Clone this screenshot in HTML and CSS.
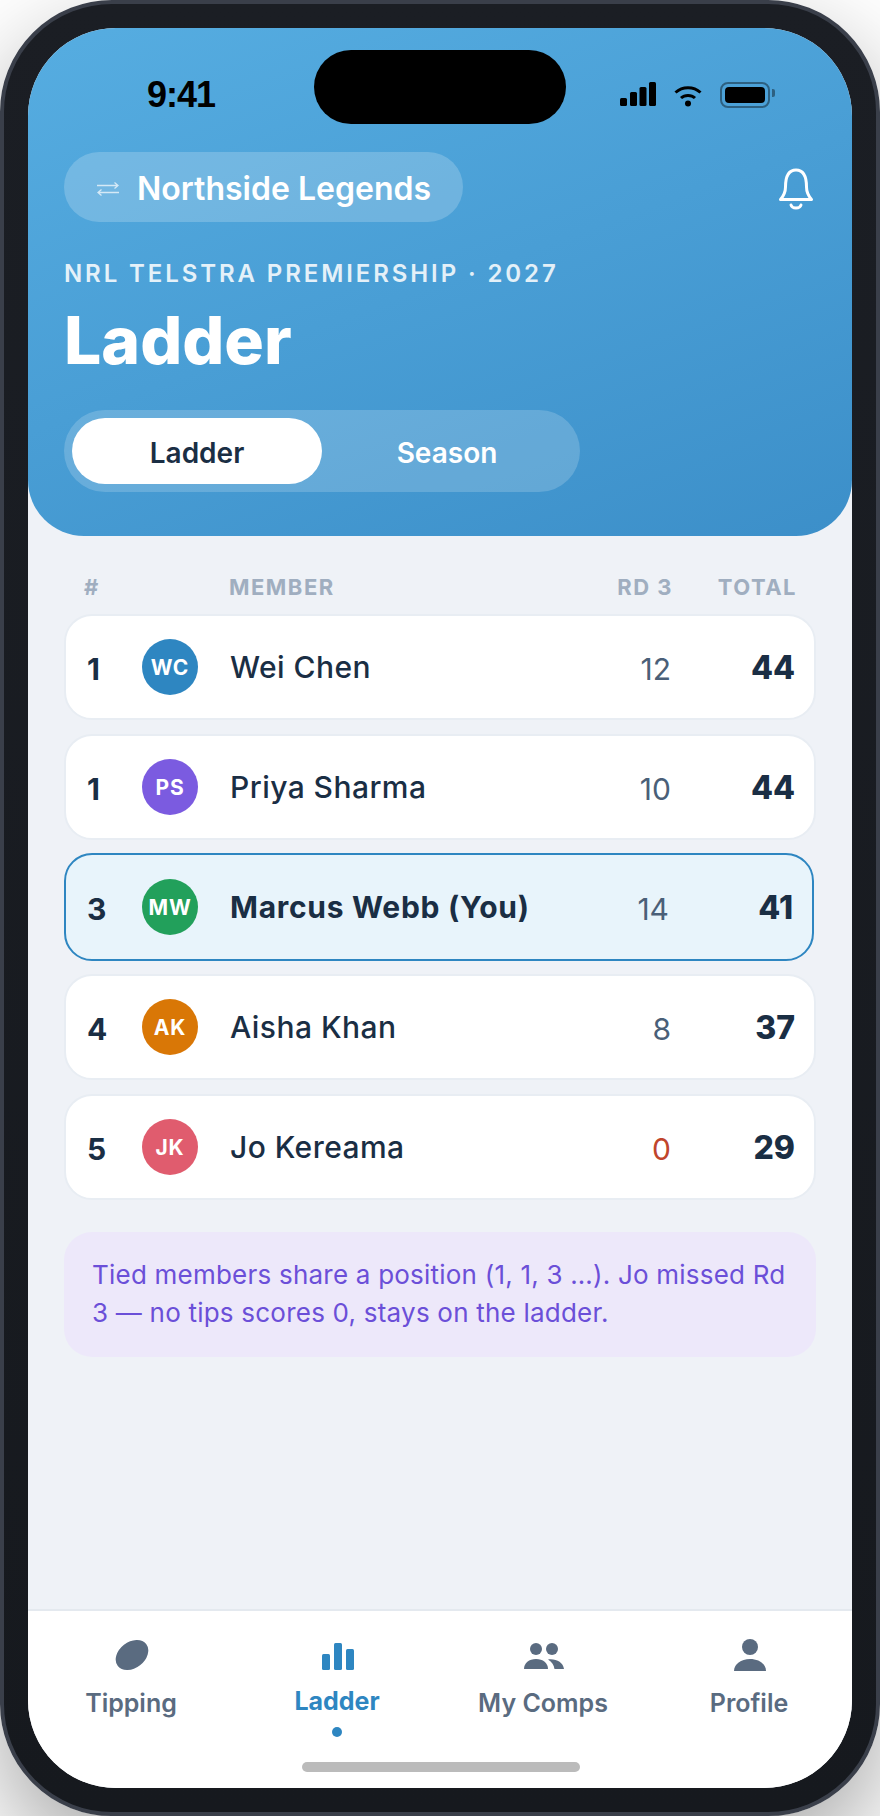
FILE: index.html
```html
<!DOCTYPE html>
<html lang="en">
<head>
  <meta charset="UTF-8">
  <title>Ladder</title>
  <link rel="stylesheet" href="styles.css">
</head>
<body>
  <div class="phone">
    <div class="screen">
      <div class="island"></div>

      <header class="hero">
        <div class="status">
          <span class="time">9:41</span>
          <div class="status-icons">
            <svg class="signal" width="36" height="24" viewBox="0 0 36 24">
              <rect x="0" y="16" width="7" height="8" rx="1.5"/>
              <rect x="10" y="10" width="7" height="14" rx="1.5"/>
              <rect x="19.500" y="5" width="7" height="19" rx="1.5"/>
              <rect x="29" y="0" width="7" height="24" rx="1.5"/>
            </svg>
            <svg class="wifi" width="28" height="22" viewBox="0 0 28 22">
              <path d="M1.500 7.500C8.500 1 19.500 1 26.500 7.500" fill="none" stroke="#000" stroke-width="3"/>
              <path d="M7 13C10.800 9.500 17.200 9.500 21 13" fill="none" stroke="#000" stroke-width="3"/>
              <circle cx="14" cy="18.500" r="3"/>
            </svg>
            <div class="battery"><div class="battery-fill"></div></div>
          </div>
        </div>

        <div class="top-row">
          <div class="comp-chip">
            <svg class="swap" width="22" height="14" viewBox="0 0 22 14" fill="none" stroke="#fff" stroke-width="1.300">
              <path d="M0 3.500H21M17.500 0.500L21 3.500L17.500 6.500"/>
              <path d="M22 10.500H1M4.500 7.500L1 10.500L4.500 13.500"/>
            </svg>
            <span>Northside Legends</span>
          </div>
          <svg class="bell" width="36" height="42" viewBox="0 0 36 42" fill="none" stroke="#fff" stroke-width="3" stroke-linecap="round" stroke-linejoin="round">
            <path d="M7.500 19C7.500 8 11 2 18 2S28.500 8 28.500 19C28.500 25 30.500 28 33.500 31.500H2.500C5.500 28 7.500 25 7.500 19Z"/>
            <path d="M13 37C14 41 22 41 23 37"/>
          </svg>
        </div>

        <div class="eyebrow">NRL TELSTRA PREMIERSHIP · 2027</div>
        <h1 class="title">Ladder</h1>

        <div class="segment">
          <div class="seg-btn active">Ladder</div>
          <div class="seg-btn">Season</div>
        </div>
      </header>

      <main class="content">
        <div class="table-head">
          <span class="col-rank">#</span>
          <span class="col-member">MEMBER</span>
          <span class="col-rd">RD 3</span>
          <span class="col-total">TOTAL</span>
        </div>

        <div class="rows">
          <div class="row">
            <span class="rank">1</span>
            <span class="avatar blue">WC</span>
            <span class="name">Wei Chen</span>
            <span class="rd">12</span>
            <span class="total">44</span>
          </div>
          <div class="row">
            <span class="rank">1</span>
            <span class="avatar purple">PS</span>
            <span class="name">Priya Sharma</span>
            <span class="rd">10</span>
            <span class="total">44</span>
          </div>
          <div class="row you">
            <span class="rank">3</span>
            <span class="avatar green">MW</span>
            <span class="name">Marcus Webb (You)</span>
            <span class="rd">14</span>
            <span class="total">41</span>
          </div>
          <div class="row">
            <span class="rank">4</span>
            <span class="avatar orange">AK</span>
            <span class="name">Aisha Khan</span>
            <span class="rd">8</span>
            <span class="total">37</span>
          </div>
          <div class="row">
            <span class="rank">5</span>
            <span class="avatar rose">JK</span>
            <span class="name">Jo Kereama</span>
            <span class="rd missed">0</span>
            <span class="total">29</span>
          </div>
        </div>

        <p class="note">Tied members share a position (1, 1, 3 …). Jo missed Rd 3 — no tips scores 0, stays on the ladder.</p>
      </main>

      <nav class="tabs">
        <div class="tab">
          <svg width="44" height="44" viewBox="0 0 44 44"><ellipse cx="23" cy="24" rx="18" ry="13" transform="rotate(-38 23 24)"/></svg>
          <span>Tipping</span>
        </div>
        <div class="tab active">
          <svg width="44" height="44" viewBox="0 0 44 44">
            <rect x="7" y="23" width="8" height="16" rx="1.500"/>
            <rect x="19" y="12" width="8" height="27" rx="1.500"/>
            <rect x="31" y="18" width="8" height="21" rx="1.500"/>
          </svg>
          <span>Ladder</span>
          <i class="tab-dot"></i>
        </div>
        <div class="tab">
          <svg width="44" height="44" viewBox="0 0 44 44">
            <circle cx="15" cy="18" r="6"/>
            <circle cx="31" cy="18" r="6"/>
            <path d="M3 38C3 32 8 28 15 28S27 32 27 38Z"/>
            <path d="M27 28.500C35 27.500 42 31 43 38H33.500C33 34 31 31 27 28.500Z"/>
          </svg>
          <span>My Comps</span>
        </div>
        <div class="tab">
          <svg width="44" height="44" viewBox="0 0 44 44">
            <circle cx="23" cy="16" r="8"/>
            <path d="M7 40C7 33 14 28 23 28S39 33 39 40Z"/>
          </svg>
          <span>Profile</span>
        </div>
      </nav>
      <div class="home-bar"></div>
    </div>
  </div>
</body>
</html>
```

FILE: styles.css
```css
* {
  box-sizing: border-box;
}

body {
  margin: 0;
  width: 880px;
  height: 1816px;
  overflow: hidden;
  background: #fff;
  font-family: 'Inter', sans-serif;
  color: #1a2e44;
}

.phone {
  width: 880px;
  height: 1816px;
  padding: 24px;
  background: linear-gradient(#1b1e24, #16191e);
  border: 4px solid #3a3f4a;
  border-radius: 112px;
  box-shadow: 0 40px 100px rgba(0, 0, 0, 0.35);
}

.screen {
  position: relative;
  width: 824px;
  height: 1760px;
  display: flex;
  flex-direction: column;
  border-radius: 88px;
  overflow: hidden;
  background: #eff2f7;
}

.island {
  position: absolute;
  top: 22px;
  left: 286px;
  width: 252px;
  height: 74px;
  background: #000;
  border-radius: 37px;
}

/* header */
.hero {
  height: 508px;
  padding: 0 36px;
  background: linear-gradient(160deg, #56ade1, #3c8fc9);
  border-radius: 0 0 56px 56px;
  color: #fff;
}

.status {
  height: 124px;
  display: flex;
  justify-content: space-between;
  align-items: flex-start;
  padding: 52px 46px 0 83px;
}

.time {
  margin-top: -5px;
  font-family: 'Liberation Sans', sans-serif;
  font-size: 36px;
  font-weight: 700;
  line-height: 40px;
  letter-spacing: -1px;
  color: #000;
}

.status-icons {
  display: flex;
  align-items: flex-start;
  gap: 18px;
  margin-top: 2px;
}

.wifi {
  margin-top: 3px;
}

.battery {
  position: relative;
  width: 50px;
  height: 26px;
  padding: 3px;
  border: 2px solid rgba(0, 0, 0, 0.4);
  border-radius: 8px;
}

.battery::after {
  content: '';
  position: absolute;
  right: -7px;
  top: 5px;
  width: 3px;
  height: 8px;
  background: rgba(0, 0, 0, 0.4);
  border-radius: 0 2px 2px 0;
}

.battery-fill {
  height: 100%;
  background: #000;
  border-radius: 4px;
}

.top-row {
  display: flex;
  justify-content: space-between;
  align-items: center;
}

.comp-chip {
  display: flex;
  align-items: center;
  gap: 18px;
  height: 70px;
  padding: 3px 32px 0 33px;
  background: rgba(255, 255, 255, 0.2);
  border-radius: 35px;
  font-size: 32px;
  font-weight: 600;
}

.swap {
  opacity: 0.7;
}

.bell {
  margin: 4px 2px 0 0;
}

.eyebrow {
  margin-top: 38px;
  font-size: 24px;
  font-weight: 600;
  line-height: 28px;
  letter-spacing: 2.900px;
  opacity: 0.85;
}

.title {
  margin: 12px 0 0;
  font-size: 66px;
  font-weight: 800;
  line-height: 80px;
}

.segment {
  display: flex;
  width: 516px;
  margin-top: 30px;
  padding: 8px;
  background: rgba(255, 255, 255, 0.18);
  border-radius: 41px;
}

.seg-btn {
  flex: 1;
  height: 66px;
  line-height: 70px;
  text-align: center;
  font-size: 28px;
  font-weight: 600;
  border-radius: 33px;
}

.seg-btn.active {
  background: #fff;
  color: #1a2e44;
}

/* table */
.content {
  flex: 1;
  padding: 39px 36px 0;
}

.table-head {
  display: flex;
  align-items: center;
  height: 24px;
  padding: 0 19px 0 20px;
  font-size: 22px;
  font-weight: 700;
  letter-spacing: 1.500px;
  color: #a0aec0;
}

.col-rank {
  width: 145px;
}

.col-member {
  flex: 1;
}

.col-rd {
  width: 70px;
  text-align: right;
}

.col-total {
  width: 124px;
  text-align: right;
}

.rows {
  display: flex;
  flex-direction: column;
  gap: 14px;
  margin-top: 15px;
}

.row {
  display: flex;
  align-items: center;
  height: 106px;
  padding: 0 19px 0 21px;
  background: #fff;
  border: 2px solid #e8edf3;
  border-radius: 28px;
}

.row.you {
  height: 108px;
  margin: -1px 2px -1px 0;
  background: #e8f4fb;
  border-color: #2e86c1;
}

.rank {
  width: 55px;
  margin-top: 3px;
  font-size: 30px;
  font-weight: 700;
}

.avatar {
  display: flex;
  align-items: center;
  justify-content: center;
  width: 56px;
  height: 56px;
  margin-right: 32px;
  border-radius: 50%;
  font-size: 21px;
  font-weight: 700;
  letter-spacing: 0.800px;
  color: #fff;
}

.blue {
  background: #2e86c1;
}

.purple {
  background: #7b5be0;
}

.green {
  background: #22a05b;
}

.orange {
  background: #d97706;
}

.rose {
  background: #e05c6e;
}

.name {
  flex: 1;
  font-size: 30px;
  font-weight: 500;
  letter-spacing: 0.450px;
}

.you .name {
  font-weight: 700;
  letter-spacing: 0.700px;
}

.rd {
  width: 60px;
  margin-top: 4px;
  font-size: 30px;
  text-align: right;
  color: #4a5f78;
}

.rd.missed {
  color: #c0452c;
}

.total {
  width: 124px;
  font-size: 32px;
  font-weight: 800;
  text-align: right;
}

.note {
  margin: 32px 0 0;
  padding: 24px 28px 25px;
  background: #ede8fa;
  border-radius: 28px;
  font-size: 26px;
  line-height: 38px;
  letter-spacing: 0.220px;
  color: #6b4fd8;
}

/* tab bar */
.tabs {
  display: grid;
  grid-template-columns: repeat(4, 1fr);
  height: 179px;
  padding-top: 20px;
  background: #fff;
  border-top: 2px solid #e4e9ef;
}

.tab {
  display: flex;
  flex-direction: column;
  align-items: center;
  font-size: 25px;
  font-weight: 600;
  color: #5a6b80;
  fill: #5a6b80;
}

.tab span {
  margin-top: 12px;
  line-height: 32px;
}

.tab.active {
  font-weight: 700;
  color: #2e86c1;
  fill: #2e86c1;
}

.tab.active span {
  margin-top: 10px;
}

.tab-dot {
  width: 10px;
  height: 10px;
  margin-top: 10px;
  background: #2e86c1;
  border-radius: 50%;
}

.home-bar {
  position: absolute;
  left: 274px;
  bottom: 16px;
  width: 278px;
  height: 10px;
  background: #bbb;
  border-radius: 5px;
}
```
